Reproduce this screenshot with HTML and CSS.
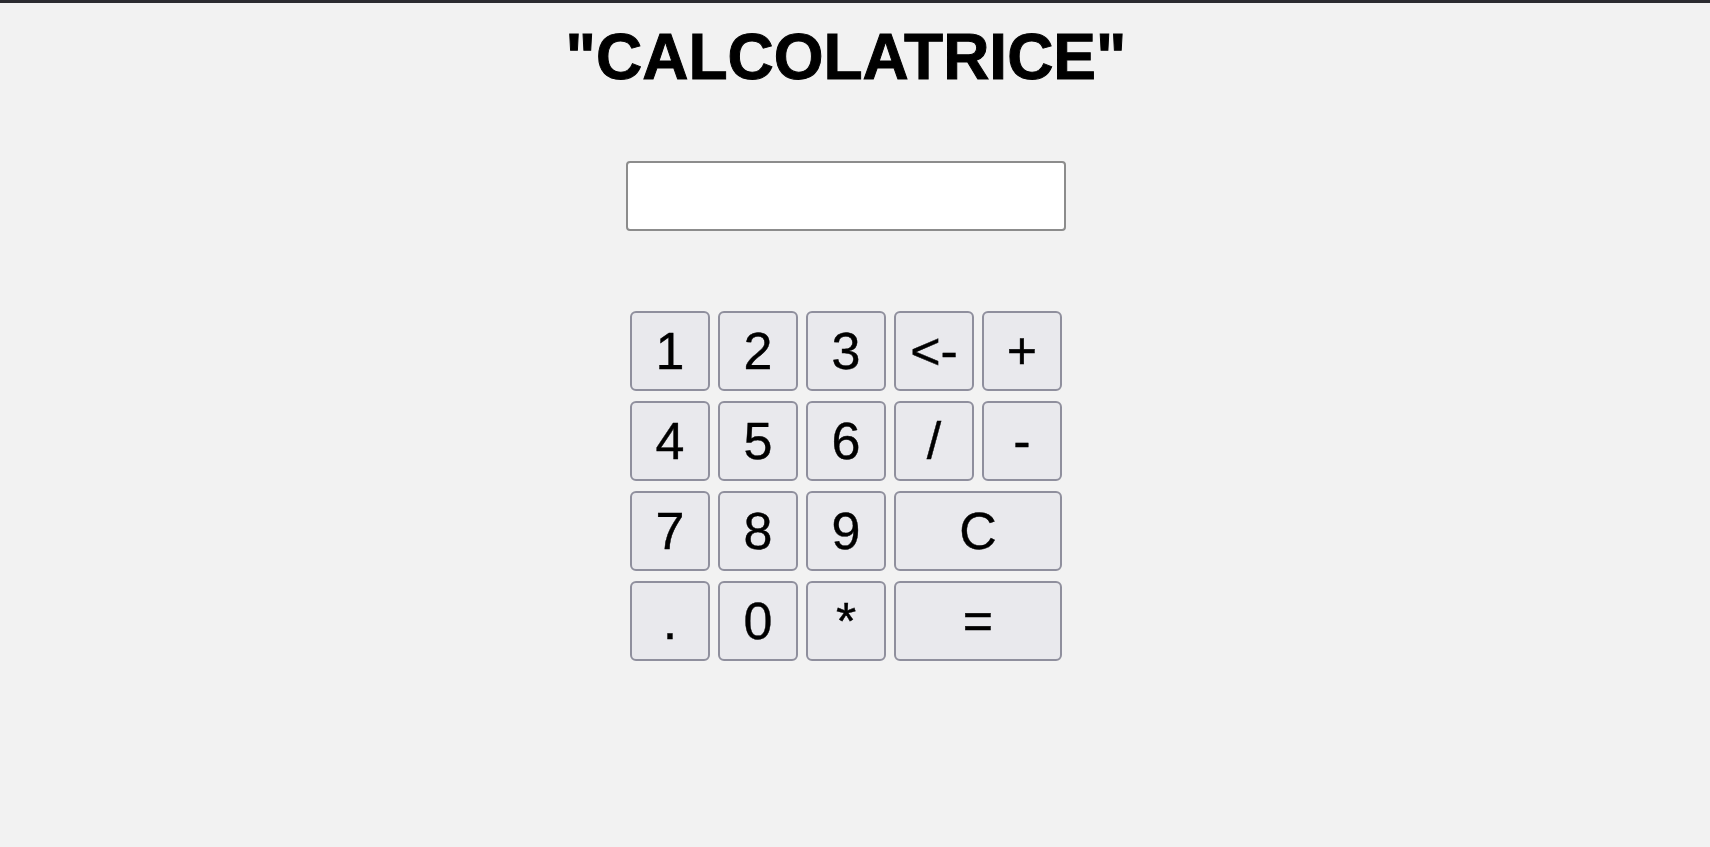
FILE: index.html
```html
<!DOCTYPE html>
<html lang="it">
<head>
<meta charset="utf-8">
<title>Calcolatrice</title>
<link rel="stylesheet" href="styles.css">
</head>
<body>
<div class="topbar"></div>
<main class="page">
  <h1 class="title">"CALCOLATRICE"</h1>
  <input class="display" type="text">
  <div class="keypad">
    <button class="key">1</button>
    <button class="key">2</button>
    <button class="key">3</button>
    <button class="key">&lt;-</button>
    <button class="key">+</button>
    <button class="key">4</button>
    <button class="key">5</button>
    <button class="key">6</button>
    <button class="key">/</button>
    <button class="key">-</button>
    <button class="key">7</button>
    <button class="key">8</button>
    <button class="key">9</button>
    <button class="key key-wide">C</button>
    <button class="key">.</button>
    <button class="key">0</button>
    <button class="key">*</button>
    <button class="key key-wide">=</button>
  </div>
</main>
</body>
</html>
```
FILE: styles.css
```css
html, body {
  margin: 0;
  padding: 0;
  background: #f2f2f2;
}

body {
  font-family: "Liberation Sans", Arial, sans-serif;
  color: #000;
}

.topbar {
  height: 3px;
  background: #2b2b30;
}

.page {
  display: flex;
  flex-direction: column;
  align-items: center;
  padding-right: 18px;
}

.title {
  margin: 17px 0 0;
  font-size: 64px;
  font-weight: bold;
  line-height: normal;
  -webkit-text-stroke: 1px #000;
}

.display {
  box-sizing: border-box;
  margin-top: 67px;
  width: 440px;
  height: 70px;
  background: #fff;
  border: 2px solid #8c8c8c;
  border-radius: 4px;
  font-family: "Liberation Sans", Arial, sans-serif;
  font-size: 32px;
  padding: 0 8px;
  outline: none;
}

.keypad {
  margin-top: 80px;
  display: grid;
  grid-template-columns: repeat(5, 80px);
  grid-auto-rows: 80px;
  column-gap: 8px;
  row-gap: 10px;
}

.key {
  box-sizing: border-box;
  margin: 0;
  padding: 0;
  background: #e9e9ed;
  border: 2px solid #8f8f9d;
  border-radius: 6px;
  font-family: "Liberation Sans", Arial, sans-serif;
  font-size: 52px;
  line-height: 1;
  color: #000;
  -webkit-text-stroke: 0.4px #000;
}

.key-wide {
  grid-column: span 2;
}
```
